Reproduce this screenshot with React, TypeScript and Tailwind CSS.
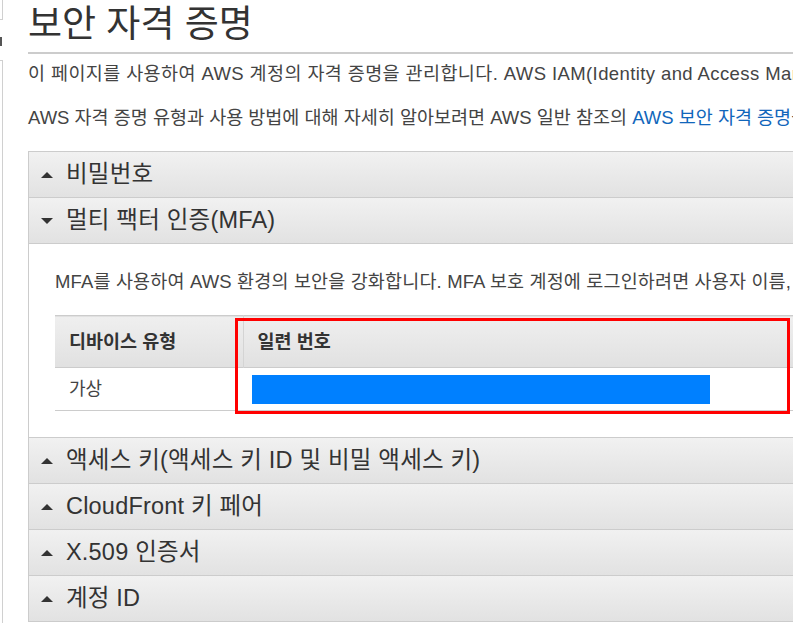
import React from 'react';

const font = { fontFamily: '"Liberation Sans", Arial, "Noto Sans CJK KR", sans-serif' };

type Section = { title: string; open?: boolean };

const sections: Section[] = [
  { title: '비밀번호' },
  { title: '멀티 팩터 인증(MFA)', open: true },
  { title: '액세스 키(액세스 키 ID 및 비밀 액세스 키)' },
  { title: 'CloudFront 키 페어' },
  { title: 'X.509 인증서' },
  { title: '계정 ID' },
];

function Caret({ open }: { open?: boolean }) {
  return (
    <svg width="12" height="6" viewBox="0 0 12 6" className="shrink-0">
      {open ? <polygon points="0,0 12,0 6,6" fill="#333" /> : <polygon points="0,6 12,6 6,0" fill="#333" />}
    </svg>
  );
}

function SectionHeader({ title, open }: Section) {
  return (
    <div className="flex h-[46px] items-center gap-[13px] border-b border-[#cccccc] bg-linear-to-b from-[#f1f1f1] to-[#e2e2e2] pl-[12px]">
      <Caret open={open} />
      <span className="whitespace-nowrap text-[23.5px] tracking-[0.2px] text-[#333]">{title}</span>
    </div>
  );
}

function MfaBody() {
  return (
    <div className="relative border-b border-[#cccccc] px-[26px] pt-[26px] pb-[26px]">
      <p className="whitespace-nowrap text-[18.5px] leading-[24px] tracking-[0.15px] text-[#444]">
        MFA를 사용하여 AWS 환경의 보안을 강화합니다. MFA 보호 계정에 로그인하려면 사용자 이름, 암호 및 MFA 디바이스의 인증 코드가 필요합니다.
      </p>
      <table className="mt-[21px] w-[1040px] border-collapse">
        <thead>
          <tr className="h-[52px] border-y border-[#cccccc] bg-linear-to-b from-[#efefef] to-[#e1e1e1]">
            <th className="w-[188px] border-r border-[#d4d4d4] pl-[14px] text-left text-[18.5px] font-bold text-[#333]">디바이스 유형</th>
            <th className="pl-[14px] text-left text-[18.5px] font-bold text-[#333]">일련 번호</th>
          </tr>
        </thead>
        <tbody>
          <tr className="h-[43px] border-b border-[#cccccc]">
            <td className="pl-[14px] text-[18px] text-[#444]">가상</td>
            <td className="pl-[9px]">
              <div className="h-[29px] w-[458px] bg-[#0080ff]" />
            </td>
          </tr>
        </tbody>
      </table>
      {/* highlight box drawn over the serial number column */}
      <div className="pointer-events-none absolute top-[74px] left-[206px] h-[96px] w-[555px] border-[3px] border-[#ff0000]" />
    </div>
  );
}

export default function App() {
  return (
    <div className="flex h-[623px] w-[793px] overflow-hidden bg-white" style={font}>
      {/* sidebar edge */}
      <div className="w-[28px] shrink-0">
        <div className="h-[20px] w-[3px] border-r border-b border-[#d0d0d0]" />
        <div className="mt-[17px] h-[9px] w-[2px] bg-[#555]" />
        <div className="mt-[14px] h-[570px] w-[3px] border-r border-t border-[#d0d0d0]" />
      </div>

      <main className="w-[1100px] shrink-0">
        <h1 className="h-[54px] whitespace-nowrap border-b-2 border-[#cccccc] pt-[2px] text-[37px] leading-[46px] text-[#333]">
          보안 자격 증명
        </h1>
        <p className="mt-[8px] whitespace-nowrap text-[18.5px] leading-[24px] tracking-[0.4px] text-[#444]">
          이 페이지를 사용하여 AWS 계정의 자격 증명을 관리합니다. AWS IAM(Identity and Access Management)을 사용하여 사용자와 권한을 관리하세요.
        </p>
        <p className="mt-[20px] whitespace-nowrap text-[18.5px] leading-[24px] text-[#444]">
          AWS 자격 증명 유형과 사용 방법에 대해 자세히 알아보려면 AWS 일반 참조의{' '}
          <a className="text-[#1166bb]">AWS 보안 자격 증명</a>을 참조하십시오.
        </p>

        <div className="mt-[21px] border-t border-l border-[#cccccc]">
          {sections.map((s) => (
            <React.Fragment key={s.title}>
              <SectionHeader {...s} />
              {s.open && <MfaBody />}
            </React.Fragment>
          ))}
        </div>
      </main>
    </div>
  );
}
